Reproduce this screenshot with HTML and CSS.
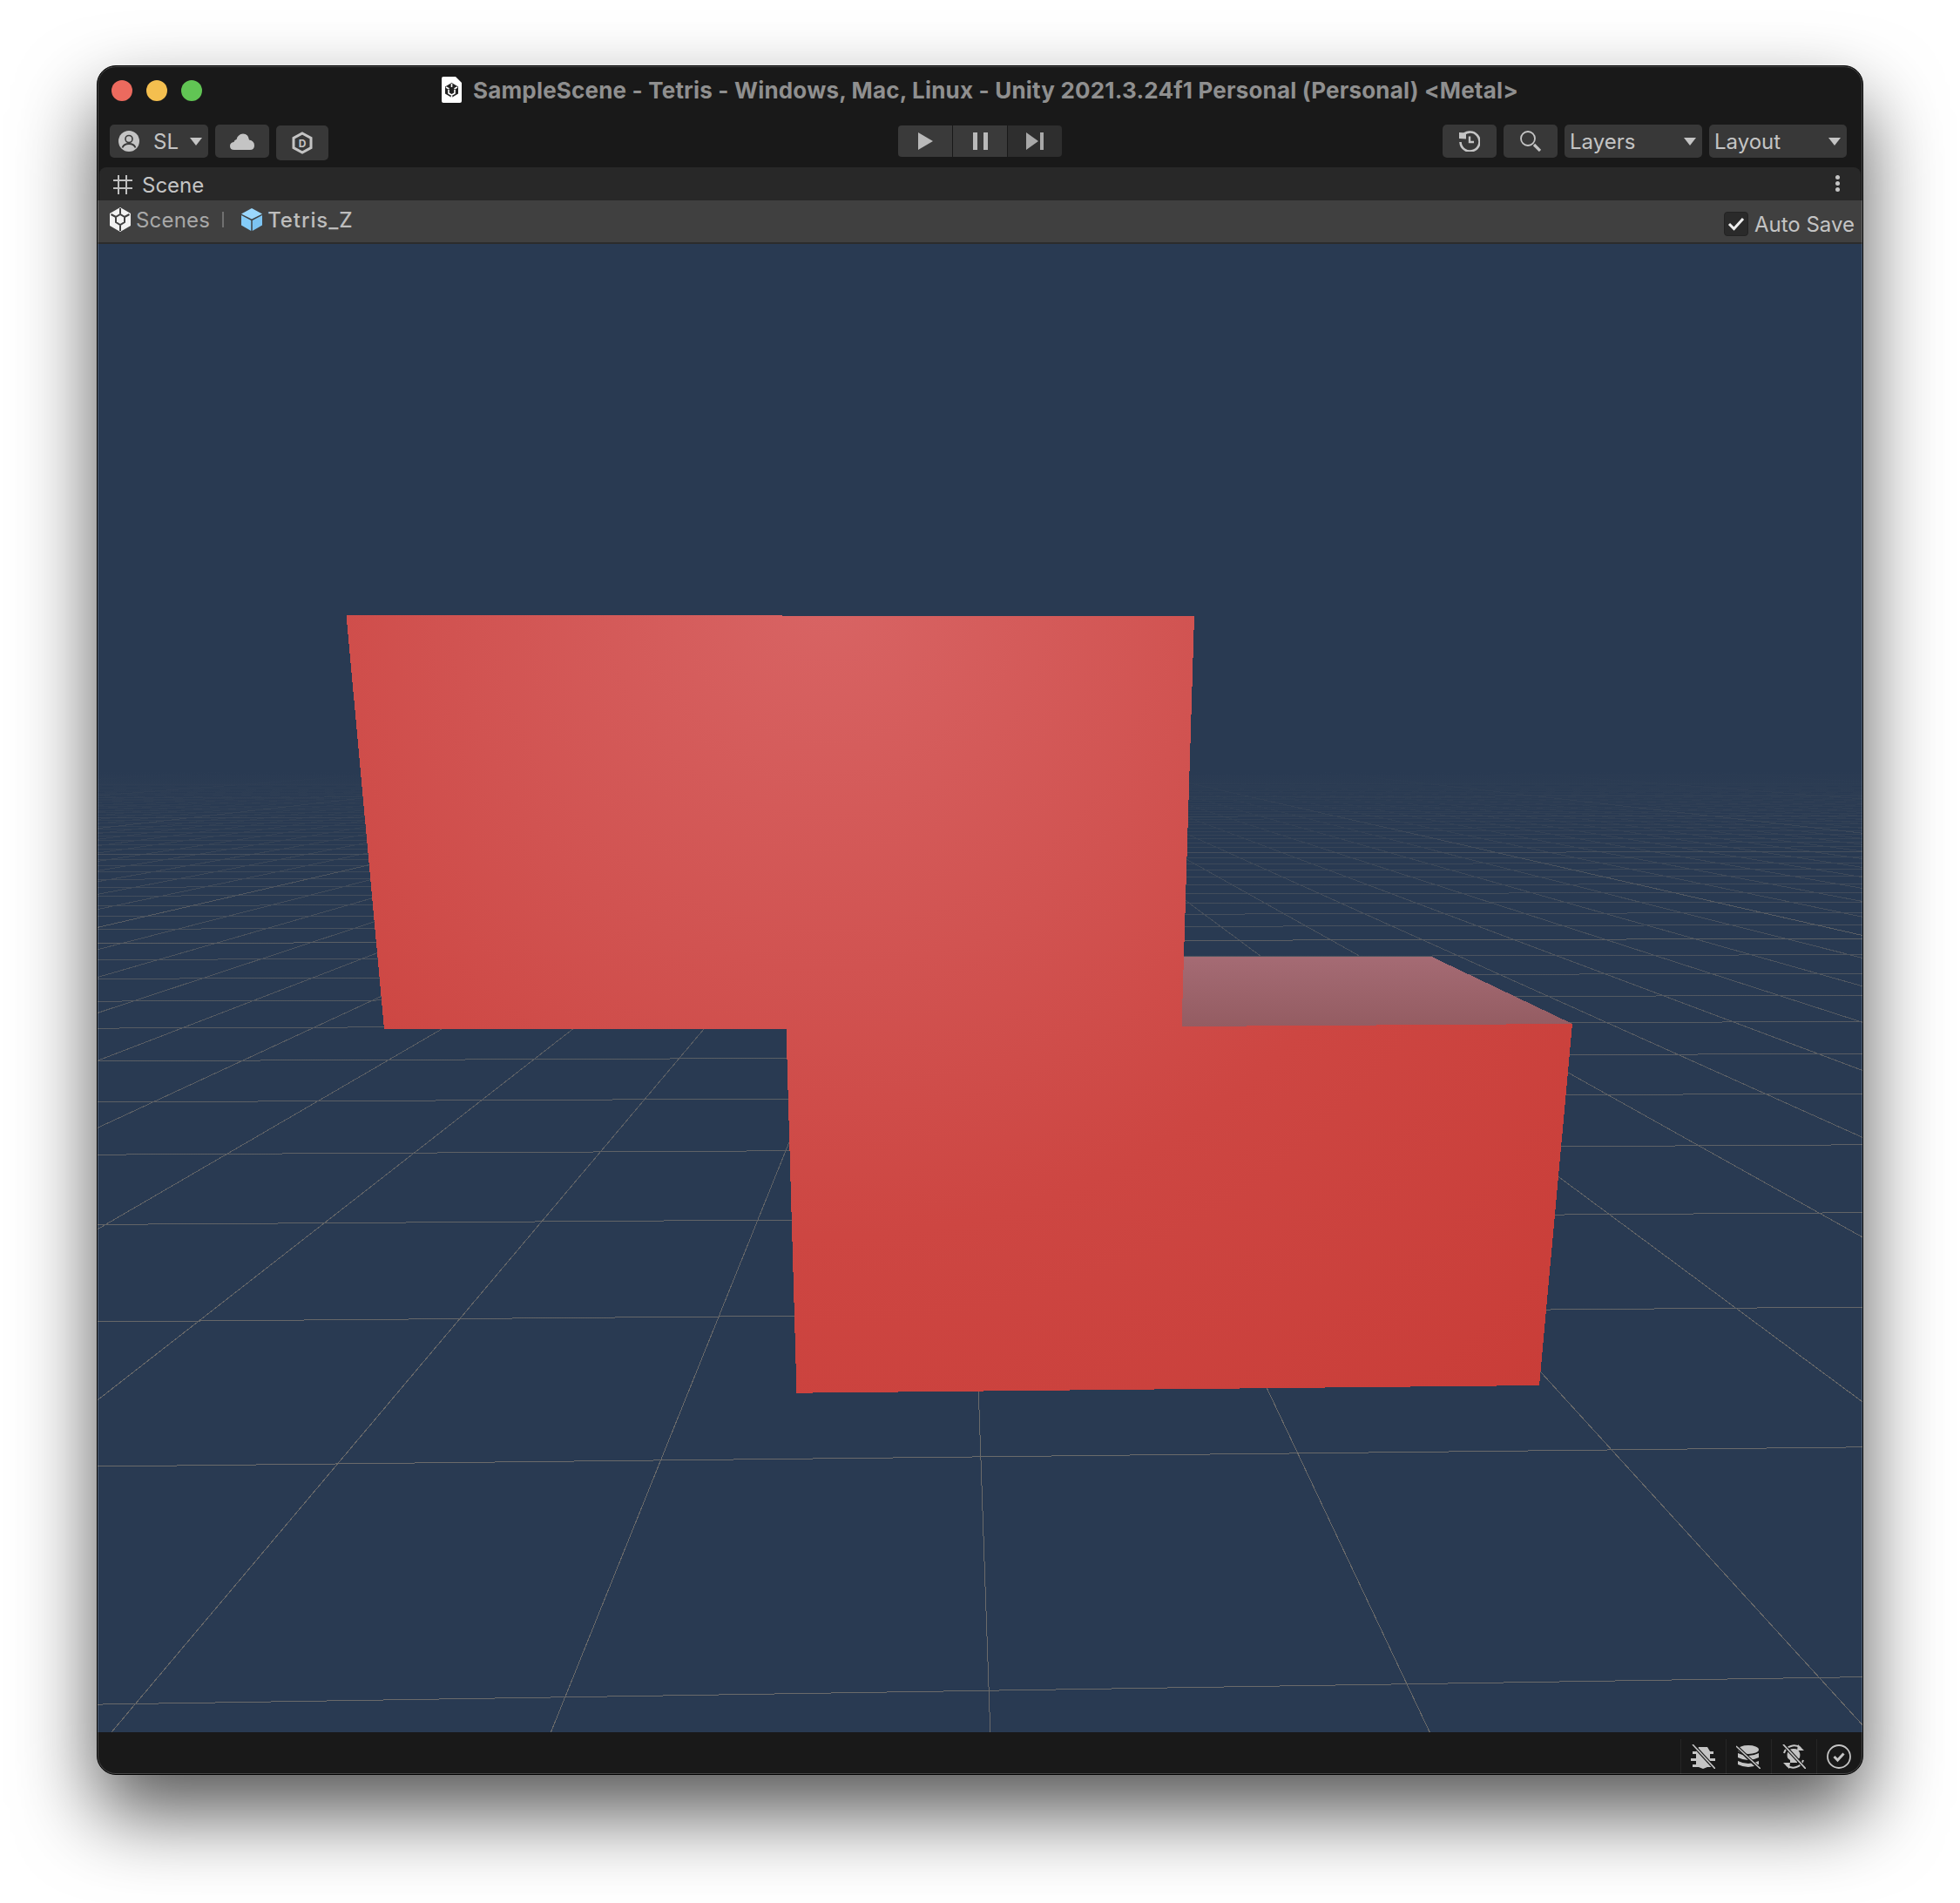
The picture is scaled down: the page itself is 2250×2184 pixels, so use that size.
FILE: index.html
```html
<!DOCTYPE html>
<html lang="en">
<head>
    <title>SampleScene - Tetris - Unity</title>
    <link rel="stylesheet" href="styles.css">
</head>
<body>
    <div class="window">
        <!-- Title row with traffic lights -->
        <div class="title-row">
            <div class="traffic">
                <span class="light light-red"></span>
                <span class="light light-yellow"></span>
                <span class="light light-green"></span>
            </div>
            <div class="title">
                <svg class="doc-icon" viewBox="0 0 23 30">
                    <path fill="#fff" d="M2 0H16L23 7V28Q23 30 21 30H2Q0 30 0 28V2Q0 0 2 0Z"/>
                    <path fill="#222" d="M11.5 7L19 11.5V19.5L11.5 24L4 19.5V11.5Z"/>
                    <path fill="none" stroke="#fff" stroke-width="1.6" d="M11.5 8V12M5 12L8.5 14M18 12L14.5 14M8 15V19L11.5 21L15 19V15M11.5 21V24"/>
                </svg>
                <span>SampleScene - Tetris - Windows, Mac, Linux - Unity 2021.3.24f1 Personal (Personal) &lt;Metal&gt;</span>
            </div>
            <div></div>
        </div>

        <!-- Main toolbar -->
        <div class="toolbar">
            <div class="tool-group">
                <div class="btn btn-account">
                    <svg class="icon-24" viewBox="0 0 24 24">
                        <circle cx="12" cy="12" r="12" fill="#c4c4c4"/>
                        <circle cx="12" cy="9.5" r="4" fill="#c4c4c4" stroke="#3a3a3a" stroke-width="1.6"/>
                        <path fill="none" stroke="#3a3a3a" stroke-width="1.8" d="M4.5 19.5C6 15.5 9 15 12 15S18 15.5 19.5 19.5"/>
                    </svg>
                    <span class="btn-label">SL</span>
                    <span class="arrow"></span>
                </div>
                <div class="btn btn-cloud">
                    <svg width="28" height="19" viewBox="0 0 28 19">
                        <path fill="#c4c4c4" d="M5 19Q0 19 0 14.5Q0 10.5 4.5 10Q5 7.5 7.5 7Q9 1 15 0.5Q21 0.5 22 7.5Q28 8.5 28 14Q28 19 23 19Z"/>
                    </svg>
                </div>
                <div class="btn btn-collab">
                    <svg width="24" height="26" viewBox="0 0 24 26">
                        <path fill="none" stroke="#c4c4c4" stroke-width="3" d="M12 2L22 7.5V18.5L12 24L2 18.5V7.5Z"/>
                        <text class="hex-letter" x="12" y="17.5" text-anchor="middle">D</text>
                    </svg>
                </div>
            </div>
            <div class="play-group">
                <div class="play-btn play-on">
                    <svg width="17" height="20" viewBox="0 0 17 20"><path fill="#b9b9b9" d="M0 0L17 10L0 20Z"/></svg>
                </div>
                <div class="play-btn play-on">
                    <svg width="17" height="20" viewBox="0 0 17 20"><path fill="#b9b9b9" d="M0 0H5V20H0ZM12 0H17V20H12Z"/></svg>
                </div>
                <div class="play-btn play-dim">
                    <svg width="20" height="20" viewBox="0 0 20 20"><path fill="#a8a8a8" d="M0 0L14 10L0 20ZM16 0H20V20H16Z"/></svg>
                </div>
            </div>
            <div class="tool-group tool-right">
                <div class="btn btn-icon">
                    <svg class="icon-24" viewBox="0 0 24 24">
                        <path fill="none" stroke="#c4c4c4" stroke-width="2.6" d="M3 7A11 11 0 1 1 1.5 13"/>
                        <path fill="#c4c4c4" d="M0 2L8 2.5V9.5L0 9Z"/>
                        <path fill="none" stroke="#c4c4c4" stroke-width="2.4" d="M12 6.5V13H17"/>
                    </svg>
                </div>
                <div class="btn btn-icon">
                    <svg class="icon-24" viewBox="0 0 24 24">
                        <circle cx="9" cy="9" r="8" fill="none" stroke="#c4c4c4" stroke-width="1.8"/>
                        <path fill="none" stroke="#c4c4c4" stroke-width="3.2" d="M16 16L23 23"/>
                    </svg>
                </div>
                <div class="btn btn-select">
                    <span>Layers</span>
                    <span class="arrow"></span>
                </div>
                <div class="btn btn-select">
                    <span>Layout</span>
                    <span class="arrow"></span>
                </div>
            </div>
        </div>

        <!-- Scene tab header -->
        <div class="tab-bar">
            <div class="tab">
                <svg width="22" height="22" viewBox="0 0 22 22">
                    <path fill="none" stroke="#c0c0c0" stroke-width="2" d="M6 0V22M15 0V22M0 6H22M0 15H22"/>
                </svg>
                <span>Scene</span>
            </div>
            <div class="kebab">
                <span class="dot"></span>
                <span class="dot"></span>
                <span class="dot"></span>
            </div>
        </div>

        <!-- Prefab breadcrumb -->
        <div class="crumbs">
            <div class="crumb-list">
                <svg class="crumb-icon" viewBox="0 0 24 28">
                    <path fill="#f2f2f2" d="M12 0L24 7V21L12 28L0 21V7Z"/>
                    <path fill="none" stroke="#404040" stroke-width="2" d="M12 1V7M1.5 8L7 11M22.5 8L17 11M7 11V17L12 20L17 17V11L12 8ZM12 20V27"/>
                </svg>
                <span class="crumb">Scenes</span>
                <span class="crumb-sep"></span>
                <svg class="crumb-icon" viewBox="0 0 26 28">
                    <path fill="#9bd8fd" d="M13 0L26 7L13 13.5L0 7Z"/>
                    <path fill="#84ccf8" d="M0 8.5L12.2 15V28L0 21Z"/>
                    <path fill="#7cc4f2" d="M26 8.5L13.8 15V28L26 21Z"/>
                </svg>
                <span class="crumb crumb-current">Tetris_Z</span>
            </div>
            <label class="auto-save">
                <span class="check">
                    <svg width="20" height="16" viewBox="0 0 20 16"><path fill="none" stroke="#eee" stroke-width="3" d="M2 8L7.5 13.5L18 2"/></svg>
                </span>
                <span>Auto Save</span>
            </label>
        </div>

        <!-- 3D scene view -->
        <div class="scene">
            <svg class="scene-canvas" viewBox="112 280 2026 1708" preserveAspectRatio="none">
                <defs>
                    <linearGradient id="grid-fade" gradientUnits="userSpaceOnUse" x1="0" y1="885" x2="0" y2="1600">
                        <stop offset="0" stop-color="#6a6a6a" stop-opacity="0"/>
                        <stop offset="0.09" stop-color="#6a6a6a" stop-opacity="0.15"/>
                        <stop offset="0.16" stop-color="#6a6a6a" stop-opacity="0.32"/>
                        <stop offset="0.245" stop-color="#6a6a6a" stop-opacity="0.48"/>
                        <stop offset="0.44" stop-color="#6a6a6a" stop-opacity="0.75"/>
                        <stop offset="1" stop-color="#6a6a6a" stop-opacity="1"/>
                    </linearGradient>
                    <radialGradient id="front-face" gradientUnits="userSpaceOnUse" cx="950" cy="680" r="1230">
                        <stop offset="0" stop-color="#d86464"/>
                        <stop offset="0.35" stop-color="#d15351"/>
                        <stop offset="0.6" stop-color="#cd4642"/>
                        <stop offset="1" stop-color="#c93d38"/>
                    </radialGradient>
                    <linearGradient id="top-face" x1="0" y1="0" x2="0" y2="1">
                        <stop offset="0" stop-color="#a56b74"/>
                        <stop offset="1" stop-color="#945c62"/>
                    </linearGradient>
                </defs>
                <path id="grid-lines" class="grid-lines"/>
                <path id="grid-major" class="grid-lines"/>
                <polygon class="block" fill="url(#top-face)" points="1358.5,1098.5 1642.5,1097.5 1805,1175 1356.5,1178"/>
                <polygon class="block" fill="url(#front-face)" points="397.5,706 1371,707 1356.5,1178 1805,1175 1767,1590 914.5,1598.7 902.5,1181 441,1181"/>
            </svg>
        </div>

        <!-- Status bar icons -->
        <div class="status-bar">
            <div class="status-item">
                <svg class="icon-28" viewBox="0 0 28 28">
                    <path fill="#c4c4c4" d="M9 3H19L22 8H26V11H22V16H28V19H22V23H26V26H19L14 28L9 26H2V23H6V19H0V16H6V11H2V8H6Z"/>
                    <path fill="none" stroke="#191919" stroke-width="4" d="M3 1L27 27"/>
                    <path fill="none" stroke="#c4c4c4" stroke-width="1.6" d="M2 0L28 28"/>
                </svg>
            </div>
            <div class="status-item">
                <svg class="icon-28" viewBox="0 0 28 28">
                    <ellipse cx="14" cy="6" rx="12" ry="5" fill="#c4c4c4"/>
                    <path fill="#c4c4c4" d="M2 10Q14 16 26 10V15Q14 21 2 15ZM2 19Q14 25 26 19V23Q14 29 2 23Z"/>
                    <path fill="none" stroke="#191919" stroke-width="4" d="M1 3L26 27"/>
                    <path fill="none" stroke="#c4c4c4" stroke-width="1.6" d="M0 2L28 28"/>
                </svg>
            </div>
            <div class="status-item">
                <svg class="icon-28" viewBox="0 0 28 28">
                    <path fill="none" stroke="#c4c4c4" stroke-width="2" d="M3 10A12 12 0 0 1 22 4M25 18A12 12 0 0 1 6 24"/>
                    <path fill="#c4c4c4" d="M19 0L26 7H18ZM9 28L2 21H10Z"/>
                    <path fill="#c4c4c4" d="M14 5A7 7 0 0 1 18 18V21H10V18A7 7 0 0 1 14 5Z"/>
                    <path fill="none" stroke="#191919" stroke-width="4" d="M3 1L27 27"/>
                    <path fill="none" stroke="#c4c4c4" stroke-width="1.8" d="M2 0L28 28"/>
                </svg>
            </div>
            <div class="status-item">
                <svg class="icon-28" viewBox="0 0 28 28">
                    <circle cx="14" cy="14" r="13" fill="none" stroke="#c4c4c4" stroke-width="1.8"/>
                    <path fill="none" stroke="#c4c4c4" stroke-width="3" d="M8.5 14L12.5 18L19.5 10.5"/>
                </svg>
            </div>
        </div>
    </div>

    <script src="grid.js"></script>
</body>
</html>
```

FILE: styles.css
```css
/* Page and window frame */
body {
    margin: 0;
    padding: 75px 111px 147px;
    background: #fff;
    font-family: Inter, "Liberation Sans", sans-serif;
    font-size: 24px;
    color: #c4c4c4;
}

.window {
    position: relative;
    display: flex;
    flex-direction: column;
    box-sizing: border-box;
    height: 1962px;
    border: 1px solid #000;
    border-radius: 22px;
    overflow: hidden;
    background: #191919;
    box-shadow: 0 44px 90px rgba(0, 0, 0, 0.66);
}

/* Thin light rim that sits over the window content */
.window::after {
    content: "";
    position: absolute;
    inset: 0;
    border-radius: 21px;
    box-shadow: inset 0 0 0 1px rgba(255, 255, 255, 0.2);
    pointer-events: none;
}

/* Title row */
.title-row {
    display: grid;
    grid-template-columns: 1fr auto 1fr;
    align-items: center;
    height: 56px;
}

.traffic {
    display: flex;
    gap: 16px;
    margin-left: 16px;
}

.light {
    width: 24px;
    height: 24px;
    border-radius: 50%;
}

.light-red { background: #ec6a5e; }
.light-yellow { background: #f4bf4f; }
.light-green { background: #61c554; }

.title {
    display: flex;
    align-items: center;
    gap: 13px;
    margin-top: -2px;
    font-size: 26px;
    font-weight: 700;
    letter-spacing: 0.18px;
    color: #8f8f8f;
    white-space: nowrap;
}

.doc-icon {
    width: 23px;
    height: 30px;
}

/* Toolbar */
.toolbar {
    display: grid;
    grid-template-columns: 1fr auto 1fr;
    align-items: flex-start;
    height: 60px;
    padding: 11px 18px 0 14px;
    box-sizing: border-box;
}

.tool-group {
    display: flex;
    gap: 8px;
}

.tool-right {
    justify-content: flex-end;
}

.btn {
    display: flex;
    align-items: center;
    box-sizing: border-box;
    height: 38px;
    border-radius: 5px;
    background: #383838;
}

.btn-account {
    width: 113px;
    padding: 0 7px 0 10px;
}

.btn-label {
    margin-left: 16px;
}

.btn-cloud {
    width: 62px;
    justify-content: center;
}

.btn-collab {
    width: 60px;
    height: 40px;
    margin-top: 1px;
    justify-content: center;
}

.btn-icon {
    width: 62px;
    justify-content: center;
}

.btn-select {
    width: 158px;
    padding: 0 7px 0 6px;
    justify-content: space-between;
}

.arrow {
    width: 0;
    height: 0;
    margin-left: auto;
    border-left: 7px solid transparent;
    border-right: 7px solid transparent;
    border-top: 9px solid #c4c4c4;
}

.icon-24 {
    width: 24px;
    height: 24px;
}

.icon-28 {
    width: 28px;
    height: 28px;
}

.hex-letter {
    font-size: 12px;
    font-weight: 700;
    fill: #c4c4c4;
}

/* Play controls */
.play-group {
    display: flex;
    gap: 1px;
    margin: 1px 0 0 4px;
}

.play-btn {
    display: flex;
    align-items: center;
    justify-content: center;
    width: 62px;
    height: 36px;
}

.play-on {
    background: #3a3a3a;
}

.play-dim {
    background: #2e2e2e;
}

.play-btn:first-child {
    border-radius: 4px 0 0 4px;
}

.play-btn:last-child {
    border-radius: 0 4px 4px 0;
}

/* Scene tab */
.tab-bar {
    display: flex;
    align-items: center;
    justify-content: space-between;
    box-sizing: border-box;
    height: 38px;
    margin: 0 2px;
    padding: 0 24px 0 16px;
    border-radius: 8px 8px 0 0;
    background: #282828;
}

.tab {
    display: flex;
    align-items: center;
    gap: 11px;
    padding-top: 2px;
}

.kebab {
    display: flex;
    flex-direction: column;
    gap: 2px;
    margin-bottom: 2px;
}

.dot {
    width: 5px;
    height: 5px;
    border-radius: 50%;
    background: #c4c4c4;
}

/* Breadcrumb */
.crumbs {
    display: flex;
    align-items: center;
    justify-content: space-between;
    box-sizing: border-box;
    height: 50px;
    padding: 0 9px 4px 14px;
    background: #404040;
    border-bottom: 2px solid #2c2c2c;
}

.crumb-list {
    display: flex;
    align-items: center;
}

.crumb-icon {
    width: 24px;
    height: 28px;
}

.crumb {
    margin-left: 6px;
    letter-spacing: 0.2px;
    color: #a8a8a8;
}

.crumb-current {
    font-weight: 500;
    letter-spacing: 0.9px;
    color: #bdbdbd;
}

.crumb-sep {
    width: 2px;
    height: 18px;
    margin: 0 20px 0 14px;
    background: #707070;
}

.auto-save {
    display: flex;
    align-items: center;
    gap: 7px;
    margin-top: 10px;
}

.check {
    display: flex;
    align-items: center;
    justify-content: center;
    box-sizing: border-box;
    width: 28px;
    height: 28px;
    border: 1px solid #232323;
    border-radius: 4px;
    background: #2a2a2a;
}

/* Scene view */
.scene {
    flex: 1;
    overflow: hidden;
    background: #293a52;
}

.scene-canvas {
    display: block;
    width: 100%;
    height: 100%;
}

.grid-lines {
    fill: none;
    stroke: url(#grid-fade);
    stroke-width: 1;
    shape-rendering: crispEdges;
}

.block {
    shape-rendering: crispEdges;
}

/* Status bar */
.status-bar {
    display: flex;
    justify-content: flex-end;
    height: 48px;
    padding-right: 1px;
    background: #191919;
}

.status-item {
    display: flex;
    align-items: center;
    justify-content: center;
    box-sizing: border-box;
    width: 52px;
    margin-top: 8px;
    padding-right: 2px;
    border-left: 1px solid #262626;
}
```

FILE: grid.js
```js
// Scene view floor grid, drawn in window pixel coordinates
const vanish = { x: 1097, y: 838 };
const horizonY = 840;
const floorBottom = 1988;

// Lines running away from the camera all meet at the vanishing point
function radialSegment(k) {
    const x = 128 + 504.4 * k;
    return `M${x} ${floorBottom}L${vanish.x} ${vanish.y}`;
}

// Lines across the view get closer together towards the horizon
function crossSegment(n) {
    const curve = 0.0000003 * n * n;
    const left = horizonY + 1 / (0.000896 + 0.00029 * n + curve);
    const right = horizonY + 1 / (0.000922 + 0.000296 * n + curve);
    return `M112 ${left.toFixed(1)}L2138 ${right.toFixed(1)}`;
}

let minor = '';
let major = '';

for (let k = -50; k <= 54; k++) {
    minor += radialSegment(k);
    if (((k % 10) + 10) % 10 === 2) {
        major += radialSegment(k);
    }
}

for (let n = 0; n <= 62; n++) {
    minor += crossSegment(n);
    if (n % 10 === 1) {
        major += crossSegment(n);
    }
}

document.getElementById('grid-lines').setAttribute('d', minor);
document.getElementById('grid-major').setAttribute('d', major);
```
